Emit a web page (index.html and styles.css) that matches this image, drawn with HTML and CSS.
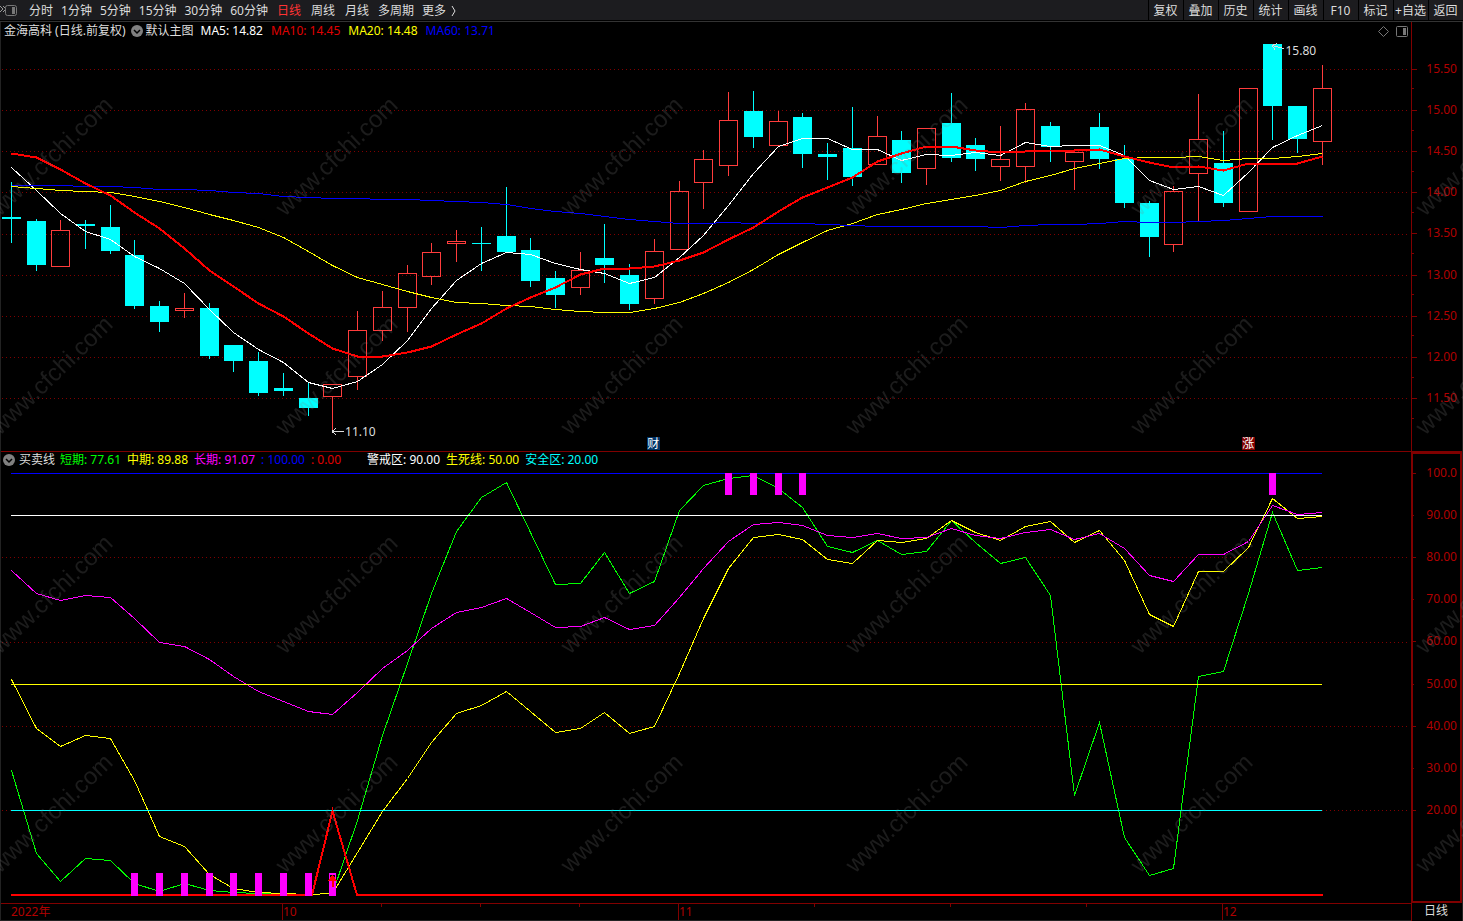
FILE: index.html
```html
<!DOCTYPE html>
<html lang="zh-CN">

<head>
  <meta charset="UTF-8">
  <meta name="viewport" content="width=device-width, initial-scale=1.0">
  <title>金海高科 日线</title>
  <link rel="stylesheet" href="styles.css">
</head>

<body>
  <header class="toolbar">
    <button class="side-toggle" aria-label="侧栏">
      <svg width="17" height="14" viewBox="0 0 17 14">
        <path d="M0 2l3 3-3 3M3 2l3 3-3 3" fill="none" stroke="#999" />
        <rect x="5.500" y="1.500" width="11" height="10" rx="2" fill="none" stroke="#777" />
        <rect x="12" y="3" width="3" height="7" fill="#777" />
      </svg>
    </button>
    <nav class="periods">
      <button>分时</button>
      <button>1分钟</button>
      <button>5分钟</button>
      <button>15分钟</button>
      <button>30分钟</button>
      <button>60分钟</button>
      <button class="day active">日线</button>
      <button class="day">周线</button>
      <button class="day">月线</button>
      <button>多周期</button>
      <button class="more">更多
        <svg width="6" height="12" viewBox="0 0 6 12"><path d="M1 1l3 5-3 5" fill="none" stroke="#ddd" /></svg>
      </button>
    </nav>
    <div class="tools">
      <button>复权</button>
      <button>叠加</button>
      <button>历史</button>
      <button>统计</button>
      <button>画线</button>
      <button>F10</button>
      <button>标记</button>
      <button>+自选</button>
      <button>返回</button>
    </div>
  </header>

  <main class="charts">
    <!-- K线 -->
    <section class="panel price-panel">
      <div class="info">
        <span class="stock">金海高科 (日线.前复权)</span>
        <button class="drop" aria-label="主图指标">
          <svg width="12" height="12" viewBox="0 0 12 12"><circle cx="6" cy="6" r="6" fill="#808080" /><path d="M3 5l3 3 3-3" fill="none" stroke="#000" stroke-width="1.5" /></svg>
        </button>
        <span class="indicator">默认主图</span>
        <span class="white">MA5: 14.82</span>
        <span class="darkred">MA10: 14.45</span>
        <span class="yellow">MA20: 14.48</span>
        <span class="blue">MA60: 13.71</span>
        <span class="corner">
          <svg width="11" height="11" viewBox="0 0 11 11"><path d="M5.500 .5l5 5-5 5-5-5z" fill="none" stroke="#777" /></svg>
          <svg width="12" height="11" viewBox="0 0 12 11"><rect x=".5" y=".5" width="11" height="10" rx="1" fill="none" stroke="#777" /><rect x="7" y="2" width="3" height="7" fill="#777" /></svg>
        </span>
      </div>
      <div class="plot">
        <svg id="price" viewBox="1 40 1410 411" preserveAspectRatio="none"></svg>
        <span class="mark low">11.10</span>
        <span class="mark high">15.80</span>
        <span class="badge report">财</span>
        <span class="badge rise">涨</span>
      </div>
    </section>
    <ul class="axis price-axis">
      <li>15.50</li>
      <li>15.00</li>
      <li>14.50</li>
      <li>14.00</li>
      <li>13.50</li>
      <li>13.00</li>
      <li>12.50</li>
      <li>12.00</li>
      <li>11.50</li>
    </ul>

    <!-- 买卖线 -->
    <section class="panel signal-panel">
      <div class="info">
        <button class="drop" aria-label="副图指标">
          <svg width="12" height="12" viewBox="0 0 12 12"><circle cx="6" cy="6" r="6" fill="#808080" /><path d="M3 5l3 3 3-3" fill="none" stroke="#000" stroke-width="1.5" /></svg>
        </button>
        <span class="indicator">买卖线</span>
        <span class="green">短期: 77.61</span>
        <span class="yellow">中期: 89.88</span>
        <span class="magenta">长期: 91.07</span>
        <span class="blue">: 100.00</span>
        <span class="darkred">: 0.00</span>
        <span class="white zone">警戒区: 90.00</span>
        <span class="yellow">生死线: 50.00</span>
        <span class="cyan">安全区: 20.00</span>
      </div>
      <div class="plot">
        <svg id="signal" viewBox="1 468 1410 435" preserveAspectRatio="none"></svg>
      </div>
    </section>
    <ul class="axis signal-axis">
      <li>100.0</li>
      <li class="minor">90.00</li>
      <li>80.00</li>
      <li class="minor">70.00</li>
      <li>60.00</li>
      <li class="minor">50.00</li>
      <li>40.00</li>
      <li class="minor">30.00</li>
      <li>20.00</li>
    </ul>

    <div class="dates">
      <svg id="weeks" class="weeks" viewBox="1 0 1410 3" preserveAspectRatio="none"></svg>
      <span>2022年</span>
      <span>10</span>
      <span>11</span>
      <span>12</span>
    </div>
    <div class="cycle">日线</div>
  </main>

  <svg id="watermark" class="watermark" aria-hidden="true"></svg>

  <script src="chart.js"></script>
</body>

</html>
```
FILE: styles.css
```css
* {
  margin: 0;
  padding: 0;
  box-sizing: border-box;
}

body {
  display: flex;
  flex-direction: column;
  height: 100vh;
  overflow: hidden;
  background: #000;
  color: #ddd;
  font-family: "Noto Sans", "Noto Sans CJK SC", sans-serif;
  font-size: 12px;
  line-height: 16px;
}

button {
  border: 0;
  background: none;
  color: inherit;
  font: inherit;
  white-space: nowrap;
  cursor: pointer;
}

svg {
  display: block;
}

/* Toolbar */
.toolbar {
  display: flex;
  flex: none;
  height: 22px;
  background: linear-gradient(#1c1c1f 20px, #000 20px);
  border-bottom: 1px solid #333;
}

.side-toggle {
  width: 25px;
}

.periods {
  display: flex;
  flex: 1;
}

.periods button {
  padding: 1px 4px 0;
}

.periods .day {
  padding: 1px 5px 0;
}

.periods .active {
  color: #f33;
}

.periods .more {
  display: flex;
  align-items: center;
  gap: 5px;
}

.tools {
  display: flex;
}

.tools button {
  width: 35px;
  padding: 1px 1px 0 0;
  border-left: 1px solid #000;
}

/* Charts */
.charts {
  flex: 1;
  min-height: 0;
  display: grid;
  grid-template-columns: 1fr 51px;
  grid-template-rows: 430fr 451fr 18px;
  border-left: 1px solid #222;
  border-right: 1px solid #222;
}

.panel {
  display: flex;
  flex-direction: column;
  min-width: 0;
  min-height: 0;
}

.price-panel {
  border-bottom: 1px solid #800000;
}

.info {
  display: flex;
  flex: none;
  align-items: center;
  white-space: nowrap;
}

.price-panel .info {
  height: 18px;
  gap: 8px;
  padding: 0 3px;
}

.signal-panel .info {
  height: 16px;
  gap: 6px;
  padding: 0 2px;
}

.price-panel .drop {
  margin: 0 -3px;
}

.info .indicator {
  margin: 0 -1px 0 -2px;
}

.info .zone {
  margin-left: 20px;
}

.corner {
  display: flex;
  gap: 7px;
  margin-left: auto;
}

.white {
  color: #fff;
}

.darkred {
  color: #e00000;
}

.yellow {
  color: #ff0;
}

.blue {
  color: #00f;
}

.green {
  color: #0f0;
}

.magenta {
  color: #f0f;
}

.cyan {
  color: #0ff;
}

.plot {
  position: relative;
  flex: 1;
  min-height: 0;
}

.plot svg {
  position: absolute;
  width: 100%;
  height: 100%;
  shape-rendering: crispEdges;
}

/* Labels pinned over the candles */
.mark,
.badge {
  position: absolute;
}

.low {
  left: 24.4%;
  top: 93.4%;
}

.high {
  left: 91.1%;
  top: 0.7%;
}

.badge {
  top: 96.6%;
  width: 13px;
  height: 13px;
  color: #fff;
  line-height: 13px;
  text-align: center;
}

.report {
  left: 45.8%;
  background: #003366;
}

.rise {
  left: 88%;
  background: #800000;
}

/* Axes */
.axis {
  display: grid;
  list-style: none;
  color: #b00000;
}

.axis li {
  position: relative;
  display: flex;
  align-items: center;
  justify-content: flex-end;
  min-height: 0;
  padding-right: 5px;
}

.axis li::before {
  content: "";
  position: absolute;
  left: 0;
  top: 50%;
  width: 5px;
  height: 1px;
  background: #800000;
}

.axis .minor::before {
  width: 3px;
}

.price-axis {
  grid-template-rows: 26fr repeat(9, 41fr) 32fr;
  border-left: 1px solid #800000;
  border-bottom: 1px solid #800000;
}

/* empty first row above the top price */
.price-axis::before {
  content: "";
}

.price-axis li::after {
  content: "";
  position: absolute;
  left: 0;
  bottom: 0;
  width: 2px;
  height: 1px;
  background: #800000;
}

.signal-axis {
  grid-template-rows: repeat(9, 42fr) 72fr;
  box-shadow: inset 0 0 0 2px #800000;
}

.dates {
  position: relative;
  display: grid;
  grid-template-columns: 281fr 396fr 544fr 189fr;
  border-top: 1px solid #800000;
  border-bottom: 1px solid #222;
  color: #b00000;
}

.dates span {
  border-left: 1px solid #800000;
}

.dates span:first-of-type {
  padding-left: 10px;
  border-left: 0;
}

.weeks {
  position: absolute;
  width: 100%;
  height: 3px;
  shape-rendering: crispEdges;
}

.cycle {
  padding-right: 2px;
  border-left: 1px solid #800000;
  text-align: center;
}

.watermark {
  position: fixed;
  inset: 0;
  width: 100%;
  height: 100%;
  pointer-events: none;
  fill: rgba(128, 128, 128, 0.22);
  font-family: "Liberation Sans", Arial, sans-serif;
  font-size: 24px;
}
```
FILE: chart.js
```javascript
// x position of the n-th trading day
function dayX(n) {
  return Math.floor(11.3 + n * 24.735) + 0.5;
}

// high, body top, body bottom, low, direction
const candles = [
  [182, 217, 219, 243, 'd'], [219, 221, 265, 271, 'd'], [220, 230, 267, 267, 'u'],
  [220, 224, 226, 249, 'd'], [205, 227, 251, 254, 'd'], [240, 255, 306, 309, 'd'],
  [301, 306, 322, 332, 'd'], [293, 308, 311, 318, 'u'], [303, 308, 356, 359, 'd'],
  [345, 345, 361, 372, 'd'], [352, 361, 393, 396, 'd'], [373, 388, 391, 396, 'd'],
  [383, 398, 408, 416, 'd'], [384, 384, 397, 430, 'u'], [311, 330, 377, 390, 'u'],
  [291, 307, 331, 341, 'u'], [265, 273, 308, 332, 'u'], [243, 252, 277, 285, 'u'],
  [230, 241, 244, 262, 'u'], [227, 243, 244, 271, 'd'], [187, 236, 252, 252, 'd'],
  [238, 250, 281, 287, 'd'], [271, 278, 295, 308, 'd'], [252, 270, 288, 295, 'u'],
  [224, 258, 265, 283, 'd'], [264, 275, 304, 310, 'd'], [239, 251, 299, 304, 'u'],
  [181, 191, 250, 250, 'u'], [150, 159, 183, 209, 'u'], [92, 120, 166, 176, 'u'],
  [91, 111, 137, 148, 'd'], [111, 121, 146, 146, 'u'], [113, 117, 154, 168, 'd'],
  [143, 154, 157, 180, 'd'], [107, 148, 177, 186, 'd'], [116, 136, 165, 165, 'u'],
  [131, 140, 173, 183, 'd'], [128, 128, 169, 185, 'u'], [93, 123, 158, 162, 'd'],
  [138, 145, 159, 171, 'd'], [126, 159, 167, 181, 'u'], [103, 109, 167, 183, 'u'],
  [122, 126, 147, 162, 'd'], [150, 152, 162, 190, 'u'], [113, 127, 159, 169, 'd'],
  [145, 159, 203, 208, 'd'], [201, 203, 237, 257, 'd'], [186, 191, 245, 252, 'u'],
  [94, 139, 174, 221, 'u'], [131, 163, 203, 207, 'd'], [88, 88, 212, 212, 'u'],
  [44, 44, 106, 140, 'd'], [106, 106, 139, 153, 'd'], [65, 88, 142, 165, 'u']
];

const ma5 = [167, 190, 213, 231, 239, 256, 268, 283, 309, 332, 349, 362, 382, 388, 381, 364, 340, 308,
  280, 263, 252, 254, 263, 269, 273, 283, 277, 257, 235, 205, 173, 146, 138, 138, 149, 149,
  160, 154, 155, 152, 155, 142, 146, 145, 145, 155, 180, 189, 186, 195, 172, 147, 135, 125];
const ma10 = [153, 157, 169, 183, 195, 212, 228, 248, 270, 286, 303, 316, 333, 348, 356, 356, 352, 346,
  334, 323, 308, 297, 287, 274, 268, 268, 266, 260, 252, 239, 227, 211, 197, 187, 177, 161,
  153, 146, 146, 150, 152, 151, 150, 150, 149, 156, 162, 167, 166, 170, 163, 163, 163, 156];
const ma20 = [186, 188, 190, 191, 192, 196, 201, 207, 214, 220, 227, 237, 251, 265, 277, 284, 291, 297,
  302, 303, 305, 306, 309, 311, 312, 312, 308, 302, 293, 282, 269, 254, 242, 230, 223, 214,
  209, 203, 199, 195, 190, 181, 175, 168, 163, 158, 157, 157, 156, 160, 158, 158, 156, 153];
const ma60 = [185, 185, 185, 186, 186, 187, 189, 189, 190, 192, 193, 196, 197, 198, 198, 199, 199, 200,
  201, 202, 204, 208, 211, 213, 216, 219, 221, 223, 223, 222, 223, 223, 223, 224, 225, 226,
  226, 226, 226, 226, 227, 225, 224, 224, 223, 221, 222, 222, 221, 220, 218, 216, 216, 216];

const shortTerm = [770, 853, 881, 858, 860, 883, 891, 883, 890, 892, 893, 894, 894, 893, 820, 735, 663, 593,
  531, 497, 482, 532, 584, 583, 552, 593, 581, 510, 485, 478, 475, 488, 507, 546, 552, 540,
  554, 551, 520, 542, 563, 557, 595, 795, 722, 837, 875, 868, 676, 671, 593, 512, 570, 567];
const midTerm = [679, 728, 746, 735, 738, 780, 836, 846, 874, 888, 892, 893, 894, 893, 852, 811, 778, 742,
  713, 705, 691, 711, 732, 728, 712, 733, 726, 673, 618, 568, 537, 534, 539, 559, 563, 540,
  542, 538, 520, 532, 540, 526, 521, 542, 530, 560, 614, 626, 571, 571, 547, 498, 518, 516];
const longTerm = [570, 593, 600, 595, 597, 618, 642, 646, 659, 676, 691, 701, 711, 714, 692, 668, 650, 628,
  612, 607, 598, 612, 627, 626, 617, 629, 625, 597, 568, 541, 524, 522, 525, 535, 537, 533,
  538, 537, 528, 535, 538, 532, 529, 539, 533, 548, 575, 581, 554, 554, 541, 505, 514, 512];

function hLine(y, color, x1, x2, extra) {
  return `<path d="M${x1} ${y + 0.5}H${x2}" stroke="${color}" ${extra || ''}/>`;
}

function gridLines(rows) {
  return rows.map(y => hLine(y, '#800000', 2, 1408, 'stroke-dasharray="1 3"')).join('');
}

function curve(values, color, width) {
  const points = values.map((y, n) => `${dayX(n)},${y + 0.5}`).join(' ');
  return `<polyline points="${points}" fill="none" stroke="${color}" stroke-width="${width || 1}"/>`;
}

function candle([high, top, bottom, low, dir], n) {
  const x = dayX(n);
  if (dir === 'd') {
    return `<path d="M${x} ${high}V${low}" stroke="#0ff"/>
      <rect x="${x - 9.5}" y="${top}" width="19" height="${bottom - top}" fill="#0ff"/>`;
  }
  return `<path d="M${x} ${high}V${top}M${x} ${bottom}V${low}" stroke="#ff3c3c"/>
    <rect x="${x - 9}" y="${top + 0.5}" width="18" height="${bottom - top - 1}" fill="none" stroke="#ff3c3c"/>`;
}

function bar(n, y) {
  return `<rect x="${dayX(n) - 3.5}" y="${y}" width="7" height="${y > 800 ? 23 : 22}" fill="#f0f"/>`;
}

// Price chart
document.getElementById('price').innerHTML =
  gridLines([69, 110, 151, 192, 234, 275, 316, 357, 398]) +
  candles.map(candle).join('') +
  curve(ma5, '#fff') +
  curve(ma20, '#ff0') +
  curve(ma60, '#00f') +
  curve(ma10, '#f00', 2) +
  '<path d="M332 431.500H344M332 431.500l4-3M332 431.500l4 3" fill="none" stroke="#ddd"/>' +
  '<path d="M1284 48.500L1272 45.500M1272 45.500l5-2M1272 45.500l3 4" fill="none" stroke="#ddd"/>';

// Signal chart
document.getElementById('signal').innerHTML =
  gridLines([557, 642, 726, 810]) +
  curve(shortTerm, '#0f0') +
  curve(midTerm, '#ff0') +
  curve(longTerm, '#f0f') +
  hLine(473, '#00f', 11, 1322) +
  hLine(515, '#fff', 11, 1322) +
  hLine(684, '#ff0', 11, 1322) +
  hLine(810, '#0ff', 11, 1322) +
  '<path d="M11 895H312L332.500 811L357 895H1323" fill="none" stroke="#f00" stroke-width="2"/>' +
  [5, 6, 7, 8, 9, 10, 11, 12, 13].map(n => bar(n, 873)).join('') +
  [29, 30, 31, 32, 51].map(n => bar(n, 473)).join('') +
  '<path d="M330.500 878V875.500H334.500V878" fill="none" stroke="#000"/>' +
  '<path d="M332.500 875l5 6h-4v6h-2v-6h-4z" fill="#f00"/>';

// Week ticks on the date axis
document.getElementById('weeks').innerHTML =
  [381, 480, 579, 814, 950, 1086].map(x => `<path d="M${x + 0.5} 0V3" stroke="#800000"/>`).join('');

// Watermark tiles
let tiles = '';
for (let y = 217; y < 1200; y += 219) {
  for (let x = 0; x < 2400; x += 285) {
    tiles += `<text transform="translate(${x} ${y}) rotate(-44)">www.cfchi.com</text>`;
  }
}
document.getElementById('watermark').innerHTML = tiles;
```
